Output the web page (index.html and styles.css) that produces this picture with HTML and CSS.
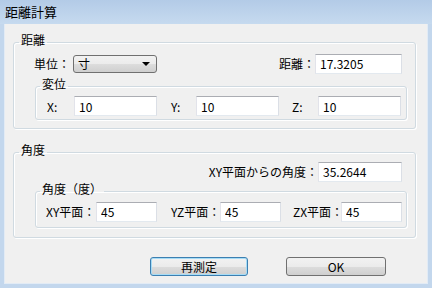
FILE: index.html
```html
<!DOCTYPE html>
<html>
<head>
  <meta charset="utf-8">
  <title>距離計算</title>
  <link rel="stylesheet" href="styles.css">
</head>
<body>
<div class="window">
  <div class="titlebar">距離計算</div>

  <div class="client">

    <!-- distance -->
    <fieldset class="group outer dist">
      <legend>距離</legend>
      <div class="row unit-row">
        <span class="lbl unit-lbl">単位：</span>
        <div class="combo"><span>寸</span><span class="arrow"></span></div>
        <span class="spacer"></span>
        <span class="lbl">距離：</span>
        <input class="edit dist-edit" value="17.3205" readonly>
      </div>
      <fieldset class="group inner disp">
        <legend>変位</legend>
        <div class="row xyz-row">
          <span class="lbl lx">X:</span><input class="edit e83" value="10" readonly>
          <span class="lbl ly">Y:</span><input class="edit e83" value="10" readonly>
          <span class="lbl lz">Z:</span><input class="edit e83" value="10" readonly>
        </div>
      </fieldset>
    </fieldset>

    <!-- angle -->
    <fieldset class="group outer angle">
      <legend>角度</legend>
      <div class="row xy-row">
        <span class="lbl">XY平面からの角度：</span>
        <input class="edit xy-edit" value="35.2644" readonly>
      </div>
      <fieldset class="group inner deg">
        <legend>角度（度）</legend>
        <div class="row plane-row">
          <span class="lbl lxy">XY平面：</span><input class="edit e61" value="45" readonly>
          <span class="lbl lyz">YZ平面：</span><input class="edit e61" value="45" readonly>
          <span class="lbl lzx">ZX平面：</span><input class="edit e61" value="45" readonly>
        </div>
      </fieldset>
    </fieldset>

    <div class="buttons">
      <button class="btn default">再測定</button>
      <button class="btn ok">OK</button>
    </div>

  </div>
</div>
</body>
</html>
```

FILE: styles.css
```css
html, body {
  margin: 0;
  padding: 0;
}

body {
  width: 432px;
  height: 288px;
  overflow: hidden;
  font-family: "Noto Sans CJK JP", sans-serif;
  font-size: 12px;
  color: #000;
}

.window {
  width: 432px;
  height: 288px;
  display: flex;
  flex-direction: column;
  background: #c3d7ed;
}

.titlebar {
  flex: none;
  height: 24px;
  line-height: 24px;
  padding-left: 5px;
  font-size: 13px;
  background: linear-gradient(#b3cbe7, #c6daef);
}

.client {
  flex: 1;
  margin: 0 4px 4px 4px;
  border: 1px solid #e2ebf5;
  border-top: none;
  background: #f0f0f0;
  padding: 9px 0 0 8px;
}

/* group boxes */
.group {
  margin: 0;
  padding: 0;
  min-width: 0;
  box-sizing: border-box;
  border: 1px solid #d0dae1;
  border-radius: 3px;
  box-shadow: 1px 1px 0 #fff, inset 1px 1px 0 #fff;
}

.group legend {
  padding: 0 2px 4px 2px;
  line-height: 14px;
  font-size: 12px;
}

.outer {
  width: 403px;
  padding-bottom: 8px;
}

.outer > legend {
  margin-left: 5px;
}

.inner {
  width: 372px;
  margin-left: 21px;
}

.inner > legend {
  margin-left: 4px;
}

.angle {
  margin-top: 14px;
  padding-bottom: 9px;
}

.row {
  display: flex;
  align-items: center;
}

.lbl {
  white-space: nowrap;
}

.spacer {
  flex: 1;
}

/* distance group */
.unit-row {
  height: 21px;
  margin-top: 2px;
  padding-left: 20px;
  padding-right: 13px;
}

.unit-lbl {
  width: 39px;
}

.dist-edit {
  width: 87px;
  height: 21px;
  margin-left: 3px;
}

.disp {
  margin-top: 3px;
  padding-bottom: 3px;
}

.xyz-row {
  height: 20px;
  margin-top: 1px;
  padding-left: 11px;
}

.lx { width: 27px; }
.ly { width: 25px; margin-left: 14px; }
.lz { width: 26px; margin-left: 13px; }

.e83 {
  width: 83px;
}

/* angle group */
.xy-row {
  height: 21px;
  justify-content: flex-end;
  padding-right: 13px;
}

.xy-edit {
  width: 84px;
  height: 21px;
  margin-left: 5px;
}

.deg {
  padding-bottom: 5px;
}

.plane-row {
  height: 21px;
  margin-top: 1px;
  padding-left: 10px;
}

.lxy { width: 50px; }
.lyz { width: 49px; margin-left: 14px; }
.lzx { width: 48px; margin-left: 12px; }

.e61 {
  width: 61px;
  height: 21px;
}

/* controls */
.edit {
  box-sizing: border-box;
  height: 20px;
  margin: 0;
  padding: 0 0 0 4px;
  font-family: "Noto Sans CJK JP", sans-serif;
  font-size: 12px;
  color: #000;
  background: #fff;
  border: 1px solid;
  border-color: #abadb3 #dbdfe6 #e3e9ef #e2e3ea;
  border-radius: 0;
  outline: none;
}

.combo {
  box-sizing: border-box;
  width: 84px;
  height: 18px;
  display: flex;
  align-items: center;
  justify-content: space-between;
  padding: 0 6px 0 4px;
  border: 1px solid #707070;
  border-radius: 3px;
  background: linear-gradient(#f2f2f2 0%, #ebebeb 50%, #dddddd 50%, #cfcfcf 100%);
}

.arrow {
  width: 0;
  height: 0;
  border-left: 4px solid transparent;
  border-right: 4px solid transparent;
  border-top: 4px solid #000;
}

.buttons {
  display: flex;
  margin-top: 19px;
  padding-left: 137px;
}

.btn {
  box-sizing: border-box;
  height: 19px;
  margin: 0;
  padding: 0;
  font-family: "Noto Sans CJK JP", sans-serif;
  font-size: 12px;
  line-height: 17px;
  color: #000;
  border: 1px solid #707070;
  border-radius: 3px;
  background: linear-gradient(#f2f2f2 0%, #ebebeb 50%, #dddddd 50%, #cfcfcf 100%);
}

.default {
  width: 98px;
  border-color: #3c7fb1;
  box-shadow: inset 0 0 0 1px #a6dcf6;
}

.ok {
  width: 100px;
  margin-left: 38px;
}
```
